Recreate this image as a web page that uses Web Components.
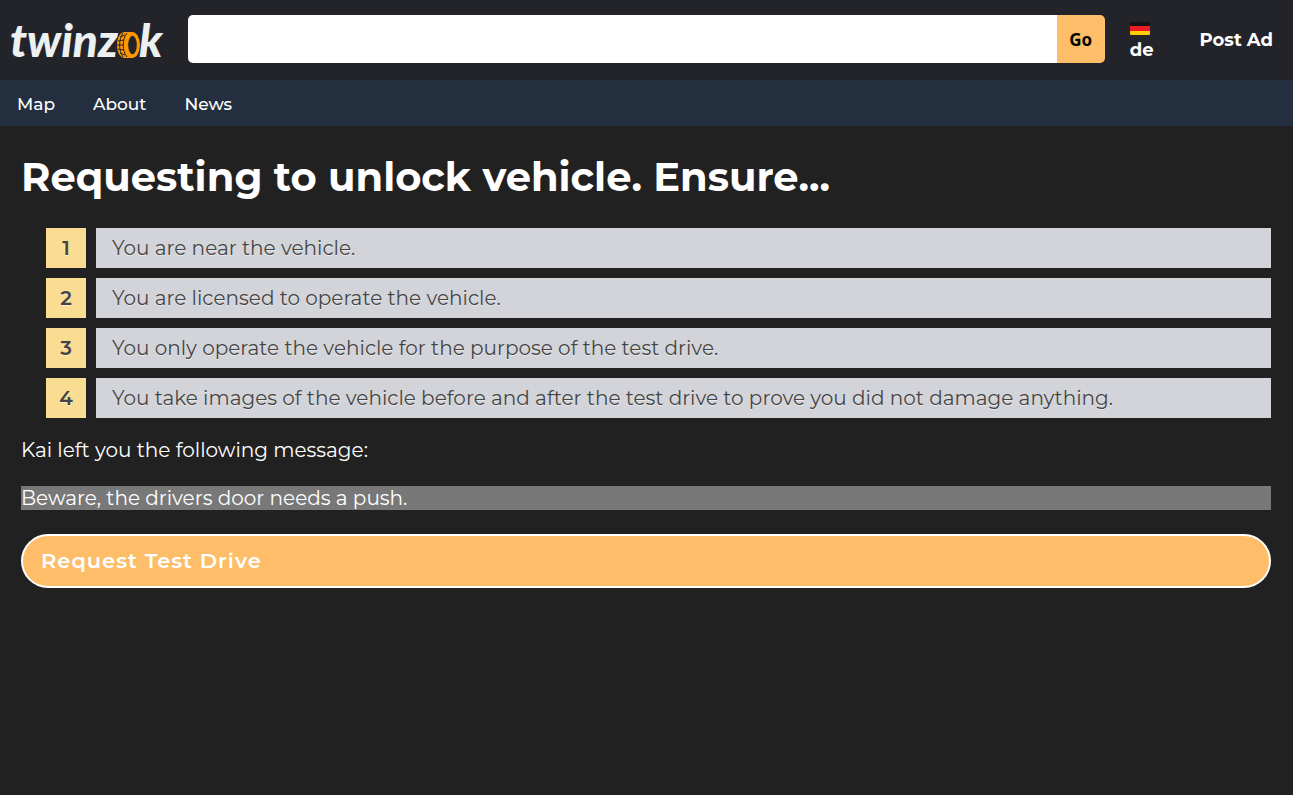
<!DOCTYPE html>
<html lang="en">
<head>
<meta charset="utf-8">
<title>twinzok – Request Test Drive</title>
<style>
html { background: #212121; }
body { margin: 0; color: #fff; font: 20px/24px Montserrat, Inter, "Open Sans", sans-serif; }
</style>
</head>
<body>
<tz-page></tz-page>
<script>
const define = (name, html, setup) => customElements.define(name, class extends HTMLElement {
  constructor() {
    super();
    this.attachShadow({ mode: 'open' }).innerHTML = html;
  }
  connectedCallback() { if (setup) setup(this, this.shadowRoot); }
});

define('tz-logo', `
<style>
:host { display: block; flex: none; width: 153px; }
a { display: flex; color: #ecf0f1; text-decoration: none; font: italic 900 46px/56px Lato, sans-serif; }
svg { flex: none; width: 23px; height: 26px; align-self: flex-end; margin: 0 -1px 10px -1px; }
</style>
<a href="#" aria-label="twinzok"><span>twinz</span><svg viewBox="0 0 23 26" aria-hidden="true">
<path d="M8 0H16V26H8C3 26 0 20 0 13S3 0 8 0Z" fill="#ff9800"/>
<ellipse cx="15" cy="13" rx="8" ry="13" fill="#ff9800"/>
<ellipse cx="15.500" cy="13" rx="4.300" ry="9.300" fill="#232429"/>
<path d="M6 1C1.500 7 1.500 19 6 25M10 1C5 7 5 19 10 25M3 5L8 3M1 9L7 8M0 13H6M1 17L7 18M3 21L8 23" fill="none" stroke="#232429" stroke-width="1"/>
</svg><span>k</span></a>`);

define('tz-search', `
<style>
:host { display: block; flex: 1; min-width: 0; }
form { display: flex; height: 48px; border-radius: 5px; overflow: hidden; }
input { flex: 1; min-width: 0; border: 0; padding: 0 12px; background: #fff; font: inherit; color: #222; outline: none; }
button { width: 48px; border: 0; padding: 2px 0 0; background: #febd69; color: #000; font: 700 17px/24px "Noto Sans", sans-serif; }
</style>
<form role="search"><input type="text" aria-label="Search"><button type="button">Go</button></form>`);

define('tz-language', `
<style>
:host { display: block; flex: none; }
a { display: flex; flex-direction: column; padding-top: 4px; color: #fff; text-decoration: none; font-size: 18px; font-weight: 700; line-height: 24px; }
svg { width: 20px; height: 13px; margin-bottom: 3px; }
</style>
<a href="#"><svg viewBox="0 0 20 13" aria-hidden="true">
<path d="M1 0H19Q20 0 20 1V4H0V1Q0 0 1 0Z" fill="#141414"/>
<path d="M0 4H20V9H0Z" fill="#ed1c24"/>
<path d="M0 9H20V12Q20 13 19 13H1Q0 13 0 12Z" fill="#ffcb05"/>
</svg><slot></slot></a>`);

define('tz-header', `
<style>
:host { display: flex; align-items: center; height: 80px; padding: 0 20px 0 10px; box-sizing: border-box; background: #232429; }
tz-search { margin: 0 0 2px 25px; }
tz-language { margin: 0 46px 0 25px; }
.post { color: #fff; text-decoration: none; font-size: 18px; font-weight: 700; white-space: nowrap; }
</style>
<tz-logo></tz-logo><tz-search></tz-search><tz-language>de</tz-language><a class="post" href="#">Post Ad</a>`);

define('tz-nav', `
<style>
:host { display: block; background: #232f3e; }
nav { display: flex; gap: 38px; padding: 12px 17px 10px; }
::slotted(a) { color: #fff; text-decoration: none; font-size: 17px; font-weight: 500; line-height: 24px; }
</style>
<nav><slot></slot></nav>`);

define('tz-steps', `
<style>
:host { display: block; }
ol { list-style: none; display: grid; gap: 10px; margin: 0; padding: 0 0 0 25px; }
</style>
<ol role="list"><slot></slot></ol>`);

define('tz-step', `
<style>
:host { display: grid; grid-template-columns: 40px 1fr; gap: 10px; color: #444; line-height: 24px; text-shadow: 0 1px 0 rgba(255,255,255,.5); }
b { background: #fadd92; padding: 8px 0; text-align: center; font-weight: 600; }
span { background: #d3d4d9; padding: 8px 16px; }
</style>
<b></b><span><slot></slot></span>`, (host, root) => {
  host.setAttribute('role', 'listitem');
  root.querySelector('b').textContent = host.getAttribute('number');
});

define('tz-message', `
<style>
:host { display: block; }
p { margin: 0 0 24px; }
blockquote { margin: 0; background: #787878; }
</style>
<p><slot name="intro"></slot></p><blockquote><slot></slot></blockquote>`);

define('tz-action', `
<style>
:host { display: block; }
button { display: block; width: 100%; padding: 13px 18px; border: 2px solid #fff; border-radius: 27px; background: #febd69; color: #fff; font: inherit; font-size: 21px; font-weight: 600; line-height: 24px; letter-spacing: 1px; text-align: left; }
</style>
<button type="button"><slot></slot></button>`);

define('tz-page', `
<style>
:host { display: block; }
main { padding: 27px 22px 24px 21px; }
h1 { margin: 0 0 27px; font-size: 40px; line-height: 48px; font-weight: 700; }
tz-message { margin: 20px 0 24px; }
</style>
<tz-header></tz-header>
<tz-nav><a href="#">Map</a><a href="#">About</a><a href="#">News</a></tz-nav>
<main>
<h1>Requesting to unlock vehicle. Ensure...</h1>
<tz-steps>
<tz-step number="1">You are near the vehicle.</tz-step>
<tz-step number="2">You are licensed to operate the vehicle.</tz-step>
<tz-step number="3">You only operate the vehicle for the purpose of the test drive.</tz-step>
<tz-step number="4">You take images of the vehicle before and after the test drive to prove you did not damage anything.</tz-step>
</tz-steps>
<tz-message><span slot="intro">Kai left you the following message:</span>Beware, the drivers door needs a push.</tz-message>
<tz-action>Request Test Drive</tz-action>
</main>`);
</script>
</body>
</html>
